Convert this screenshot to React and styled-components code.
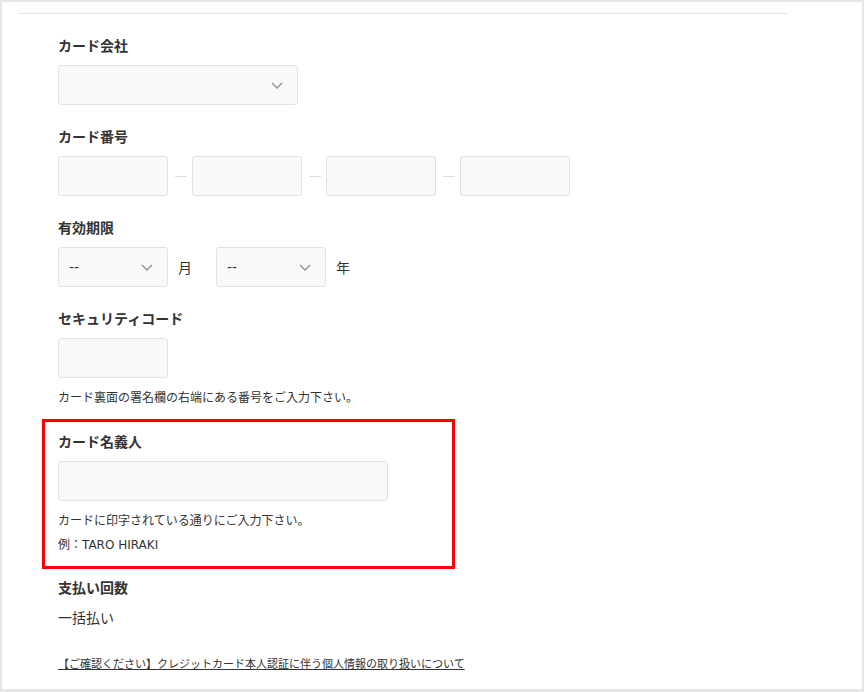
import React from 'react'
import styled, { createGlobalStyle } from 'styled-components'

const GlobalStyle = createGlobalStyle`
  html, body {
    margin: 0;
    padding: 0;
    background: #e6e6e6;
  }
  body {
    font-family: "DejaVu Sans", "Noto Sans CJK JP", sans-serif;
    color: #333;
  }
`

const Panel = styled.div`
  margin: 2px;
  height: 687px;
  background: #fff;
  overflow: hidden;
`

const Rule = styled.div`
  margin: 11px 74px 0 16px;
  height: 1px;
  background: #e3e3e3;
`

const Form = styled.div`
  padding: 22px 0 0 56px;
`

const Section = styled.div`
  margin-bottom: 22px;
`

const Highlight = styled.div`
  width: 381px;
  margin: -11px 0 0 -16px;
  padding: 10px 13px 11px;
  border: 3px solid #f00;
`

const Label = styled.div`
  font-size: 14px;
  font-weight: bold;
  line-height: 20px;
  margin-bottom: 9px;
`

const Row = styled.div`
  display: flex;
  align-items: center;
`

const Field = styled.div`
  box-sizing: border-box;
  width: ${p => p.$w || 110}px;
  height: 40px;
  background: #f9f9f9;
  border: 1px solid #e2e2e2;
  border-radius: 3px;
`

const SelectBox = styled(Field)`
  display: flex;
  align-items: center;
  justify-content: space-between;
  padding: 0 14px 0 10px;
  font-size: 14px;
  color: #333;
`

const Dash = styled.span`
  width: 12px;
  height: 1px;
  margin: 0 5px 0 7px;
  background: #ddd;
`

const Unit = styled.span`
  font-size: 14px;
  margin: 0 ${p => p.$after || 0}px 0 10px;
`

const Help = styled.div`
  font-size: 12px;
  line-height: 20px;
  margin-top: ${p => p.$mt || 0}px;
`

const Value = styled.div`
  font-size: 14px;
  line-height: 20px;
  margin-top: 10px;
`

const Notice = styled.a`
  display: inline-block;
  margin-top: 28px;
  font-size: 11px;
  line-height: 18px;
  color: #333;
  text-decoration: underline;
`

const Chevron = () => (
  <svg width="12" height="7" viewBox="0 0 12 7">
    <polyline points="1,1 6,6 11,1" fill="none" stroke="#999" strokeWidth="1.5" />
  </svg>
)

const Select = ({ w, text }) => (
  <SelectBox $w={w}>
    <span>{text}</span>
    <Chevron />
  </SelectBox>
)

export default function App() {
  return (
    <>
      <GlobalStyle />
      <Panel>
        <Rule />
        <Form>
          <Section>
            <Label>カード会社</Label>
            <Select w={240} text="" />
          </Section>

          <Section>
            <Label>カード番号</Label>
            <Row>
              <Field />
              <Dash />
              <Field />
              <Dash />
              <Field />
              <Dash />
              <Field />
            </Row>
          </Section>

          <Section>
            <Label>有効期限</Label>
            <Row>
              <Select w={110} text="--" />
              <Unit $after={24}>月</Unit>
              <Select w={110} text="--" />
              <Unit>年</Unit>
            </Row>
          </Section>

          <Section>
            <Label>セキュリティコード</Label>
            <Field />
            <Help $mt={10}>カード裏面の署名欄の右端にある番号をご入力下さい。</Help>
          </Section>

          <Highlight>
            <Label>カード名義人</Label>
            <Field $w={330} />
            <Help $mt={10}>カードに印字されている通りにご入力下さい。</Help>
            <Help $mt={4}>例：TARO HIRAKI</Help>
          </Highlight>

          <Section style={{ marginTop: 9 }}>
            <Label style={{ marginBottom: 0 }}>支払い回数</Label>
            <Value>一括払い</Value>
            <Notice href="#">【ご確認ください】クレジットカード本人認証に伴う個人情報の取り扱いについて</Notice>
          </Section>
        </Form>
      </Panel>
    </>
  )
}
